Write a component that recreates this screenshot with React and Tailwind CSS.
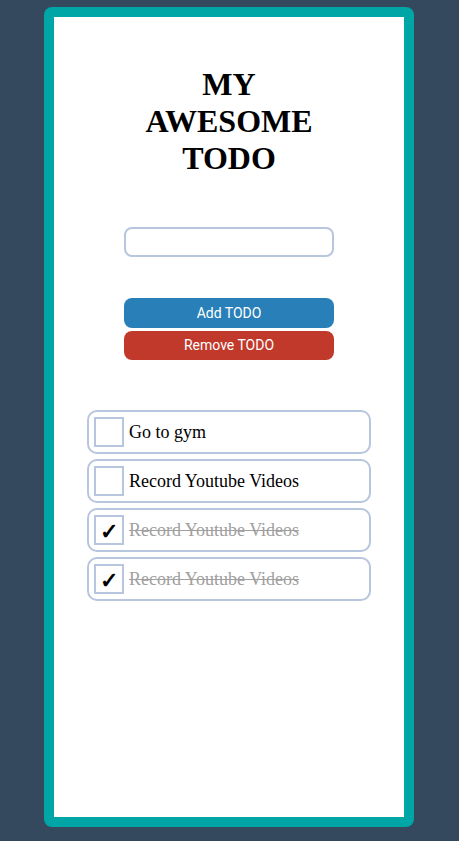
import React, { useState } from 'react';

const initialTodos = [
  { id: 1, text: 'Go to gym', done: false },
  { id: 2, text: 'Record Youtube Videos', done: false },
  { id: 3, text: 'Record Youtube Videos', done: true },
  { id: 4, text: 'Record Youtube Videos', done: true },
];

const App = () => {
  const [todos, setTodos] = useState(initialTodos);
  const [text, setText] = useState('');

  const toggle = (id) => {
    setTodos(todos.map((t) => (t.id === id ? { ...t, done: !t.done } : t)));
  };

  const addTodo = () => {
    if (!text.trim()) return;
    setTodos([...todos, { id: Date.now(), text, done: false }]);
    setText('');
  };

  const removeTodo = () => {
    setTodos(todos.filter((t) => !t.done));
  };

  return (
    <div className="min-h-screen bg-[#34495e] pt-[7px] pb-[14px]">
      <div className="ml-[44px] w-[370px] h-[820px] rounded-[8px] bg-[#00a5a5] p-[10px]">
        <div className="h-full bg-white flex flex-col items-center font-['Liberation_Serif',serif]">
          <h1 className="mt-[49px] w-[200px] text-center text-[32px] leading-[37px] font-bold text-black">
            MY AWESOME TODO
          </h1>

          <input
            value={text}
            onChange={(e) => setText(e.target.value)}
            className="mt-[50px] w-[210px] h-[30px] rounded-[8px] border-2 border-[#b7c5de] px-2 outline-none"
          />

          <div className="mt-[41px] flex flex-col gap-[3px] font-['Roboto',sans-serif]">
            <button
              onClick={addTodo}
              className="w-[210px] h-[30px] rounded-[8px] bg-[#2980b9] text-white text-[14px]"
            >
              Add TODO
            </button>
            <button
              onClick={removeTodo}
              className="w-[210px] h-[29px] rounded-[8px] bg-[#c0392b] text-white text-[14px]"
            >
              Remove TODO
            </button>
          </div>

          <ul className="mt-[50px] flex flex-col gap-[5px] w-[284px]">
            {todos.map((todo) => (
              <li
                key={todo.id}
                className="h-[44px] rounded-[10px] border-2 border-[#b7c5de] flex items-center pl-[5px]"
              >
                <button
                  onClick={() => toggle(todo.id)}
                  className="w-[30px] h-[30px] border-2 border-[#b7c5de] flex items-center justify-center pt-[3px] text-[22px] leading-none font-bold text-black"
                >
                  {todo.done ? '✓' : ''}
                </button>
                <span
                  className={`ml-[5px] text-[18px] ${
                    todo.done ? 'text-[#a0a0a0] line-through' : 'text-black'
                  }`}
                >
                  {todo.text}
                </span>
              </li>
            ))}
          </ul>
        </div>
      </div>
    </div>
  );
};

export default App;
